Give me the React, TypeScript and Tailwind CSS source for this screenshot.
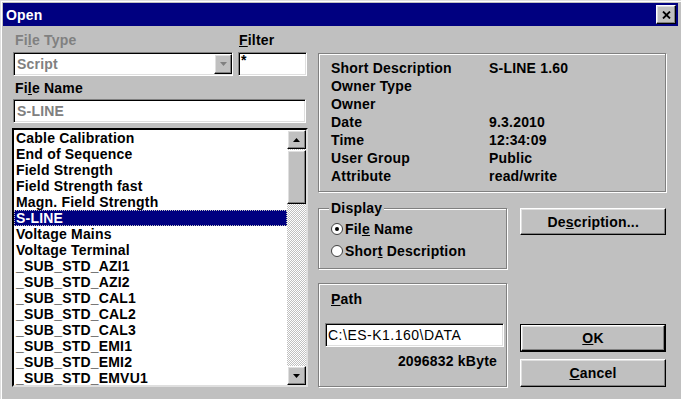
import React from 'react';

const raised =
  'border border-t-white border-l-white border-r-black border-b-black shadow-[inset_-1px_-1px_0_#808080,inset_1px_1px_0_#dfdfdf] bg-[#c0c0c0]';
const sunken =
  'border border-t-[#808080] border-l-[#808080] border-r-white border-b-white shadow-[inset_1px_1px_0_#000,inset_-1px_-1px_0_#dfdfdf]';
const etched = 'border border-[#808080] shadow-[1px_1px_0_#fff,inset_1px_1px_0_#fff]';

const files = [
  'Cable Calibration',
  'End of Sequence',
  'Field Strength',
  'Field Strength fast',
  'Magn. Field Strength',
  'S-LINE',
  'Voltage Mains',
  'Voltage Terminal',
  '_SUB_STD_AZI1',
  '_SUB_STD_AZI2',
  '_SUB_STD_CAL1',
  '_SUB_STD_CAL2',
  '_SUB_STD_CAL3',
  '_SUB_STD_EMI1',
  '_SUB_STD_EMI2',
  '_SUB_STD_EMVU1',
];

const info: [string, string][] = [
  ['Short Description', 'S-LINE 1.60'],
  ['Owner Type', ''],
  ['Owner', ''],
  ['Date', '9.3.2010'],
  ['Time', '12:34:09'],
  ['User Group', 'Public'],
  ['Attribute', 'read/write'],
];

function Arrow({ dir, color = '#000' }: { dir: 'up' | 'down'; color?: string }) {
  return (
    <svg width="7" height="4" viewBox="0 0 7 4">
      <polygon points={dir === 'up' ? '3.5,0 7,4 0,4' : '0,0 7,0 3.5,4'} fill={color} />
    </svg>
  );
}

function Radio({ checked, children }: { checked?: boolean; children: React.ReactNode }) {
  return (
    <div className="flex items-center h-[16px]">
      <svg width="12" height="12" viewBox="0 0 12 12" className="mr-[2px]">
        <circle cx="6" cy="6" r="5.5" fill="#fff" stroke="#404040" />
        {checked && <circle cx="6" cy="6" r="2" fill="#000" />}
      </svg>
      <span>{children}</span>
    </div>
  );
}

export default function App() {
  return (
    <div className="w-[681px] h-[399px] bg-[#c0c0c0] p-[3px] overflow-hidden shadow-[inset_1px_1px_0_#dfdfdf,inset_2px_2px_0_#fff] font-['Liberation_Sans',Arial,sans-serif] font-bold text-[14px] tracking-[0.2px] leading-[16px] text-black">
      {/* Title bar */}
      <div className="h-[23px] bg-[#000080] flex items-center justify-between pl-[3px] pr-[2px]">
        <span className="text-white">Open</span>
        <div className={`${raised} w-[20px] h-[19px] flex items-center justify-center`}>
          <svg width="9" height="8" viewBox="0 0 9 8">
            <path d="M1 0.5 L8 7.5 M8 0.5 L1 7.5" stroke="#000" strokeWidth="1.8" />
          </svg>
        </div>
      </div>

      <div className="flex pl-[9px]">
        {/* Left column */}
        <div className="w-[296px] flex flex-col">
          <div className="mt-[6px] h-[16px] flex">
            <span className="w-[227px] pl-[3px] text-[#808080]">
              Fi<u>l</u>e Type
            </span>
            <span>
              <u>F</u>ilter
            </span>
          </div>
          <div className="mt-[4px] flex">
            <div className={`${sunken} ml-[1px] w-[220px] h-[24px] bg-white flex items-center`}>
              <span className="flex-1 pl-[3px] text-[#808080]">Script</span>
              <div className={`${raised} w-[18px] h-[20px] flex items-center justify-center`}>
                <Arrow dir="down" color="#808080" />
              </div>
            </div>
            <div className={`${sunken} ml-[5px] w-[69px] h-[24px] bg-white pl-[2px] leading-[14px]`}>*</div>
          </div>
          <div className="mt-[4px] h-[16px] pl-[3px]">
            Fi<u>l</u>e Name
          </div>
          <div className={`${sunken} mt-[3px] ml-[1px] w-[293px] h-[24px] bg-white flex items-center pl-[3px] text-[#808080]`}>
            S-LINE
          </div>
          <div className="mt-[5px] w-[296px] h-[259px] bg-white flex border-2 border-t-[#000] border-l-[#000] border-r-[#dfdfdf] border-b-[#dfdfdf]">
            <div className="flex-1 overflow-hidden">
              {files.map((f) => (
                <div
                  key={f}
                  className={
                    f === 'S-LINE'
                      ? 'h-[16px] pl-[2px] bg-[#000080] text-white outline-1 outline-dotted outline-[#c0c0c0] -outline-offset-1'
                      : 'h-[16px] pl-[2px]'
                  }
                >
                  {f}
                </div>
              ))}
            </div>
            <div className="w-[19px] flex flex-col bg-[repeating-conic-gradient(#ffffff_0%_25%,#c0c0c0_0%_50%)] bg-[length:2px_2px]">
              <div className={`${raised} h-[19px] flex items-center justify-center`}>
                <Arrow dir="up" />
              </div>
              <div className={`${raised} h-[54px] mt-px`} />
              <div className="flex-1" />
              <div className={`${raised} h-[19px] flex items-center justify-center`}>
                <Arrow dir="down" />
              </div>
            </div>
          </div>
        </div>

        {/* Right column */}
        <div className="ml-[10px] w-[348px] flex flex-col">
          <div className={`${etched} mt-[27px] h-[139px] pt-[6px] pl-[12px]`}>
            {info.map(([k, v]) => (
              <div key={k} className="h-[18px] flex">
                <span className="w-[158px]">{k}</span>
                <span>{v}</span>
              </div>
            ))}
          </div>

          <div className="mt-[16px] flex">
            <div className={`${etched} relative w-[190px] h-[61px] pt-[12px] pl-[12px] flex flex-col gap-[6px]`}>
              <span className="absolute -top-[9px] left-[10px] px-[2px] bg-[#c0c0c0]">Display</span>
              <Radio checked>
                Fil<u>e</u> Name
              </Radio>
              <Radio>
                Shor<u>t</u> Description
              </Radio>
            </div>
            <div className={`${raised} ml-[13px] w-[146px] h-[27px] flex items-center justify-center`}>
              <span>
                De<u>s</u>cription...
              </span>
            </div>
          </div>

          <div className="mt-[14px] flex">
            <div className={`${etched} w-[190px] h-[104px] pt-[7px] pl-[6px]`}>
              <div className="h-[16px] pl-[6px]">
                <u>P</u>ath
              </div>
              <div className={`${sunken} mt-[16px] w-[179px] h-[24px] bg-white flex items-center pl-[2px] font-normal tracking-[0.5px]`}>
                C:\ES-K1.160\DATA
              </div>
              <div className="mt-[6px] w-[172px] text-right">2096832 kByte</div>
            </div>
            <div className="ml-[13px] flex flex-col pt-[41px]">
              <div className="w-[146px] h-[28px] border border-black">
                <div className={`${raised} w-full h-full flex items-center justify-center`}>
                  <span>
                    <u>O</u>K
                  </span>
                </div>
              </div>
              <div className={`${raised} mt-[7px] w-[146px] h-[28px] flex items-center justify-center`}>
                <span>
                  <u>C</u>ancel
                </span>
              </div>
            </div>
          </div>
        </div>
      </div>
    </div>
  );
}
